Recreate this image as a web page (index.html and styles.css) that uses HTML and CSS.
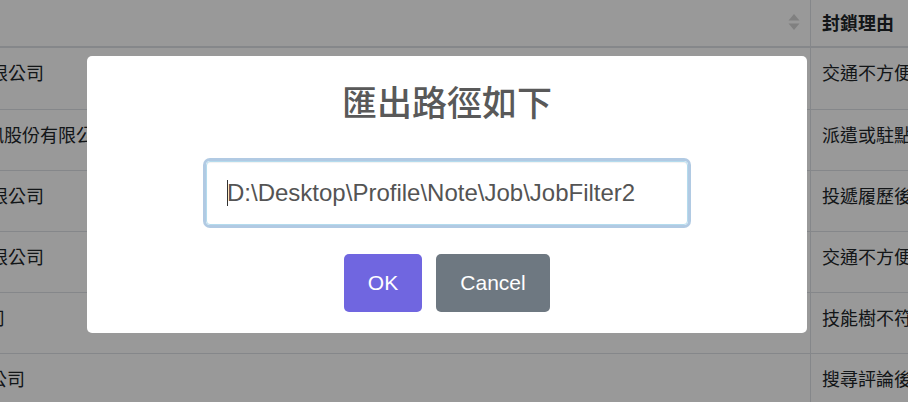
FILE: index.html
```html
<!DOCTYPE html>
<html lang="zh-Hant">
<head>
<meta charset="utf-8">
<title>匯出路徑</title>
<link rel="stylesheet" href="styles.css">
</head>
<body>
<div class="page">
  <div class="thead">
    <div class="c1"></div>
    <div class="c2">
      <svg class="sort" width="12" height="18" viewBox="0 0 12 18" aria-hidden="true">
        <path d="M6 1 L11.5 7.5 H0.5 Z" />
        <path d="M6 17 L11.5 10.5 H0.5 Z" />
      </svg>
    </div>
    <div class="c3 th">封鎖理由</div>
  </div>
  <div class="row">
    <div class="c1"><span class="name n1">台灣數位科技有限公司</span></div>
    <div class="c2"></div>
    <div class="c3">交通不方便，通勤時間過長</div>
  </div>
  <div class="row">
    <div class="c1"><span class="name n2">群創資訊股份有限公司</span></div>
    <div class="c2"></div>
    <div class="c3">派遣或駐點工作</div>
  </div>
  <div class="row">
    <div class="c1"><span class="name n3">日新國際有限公司</span></div>
    <div class="c2"></div>
    <div class="c3">投遞履歷後無回應</div>
  </div>
  <div class="row">
    <div class="c1"><span class="name n3">永豐網路有限公司</span></div>
    <div class="c2"></div>
    <div class="c3">交通不方便</div>
  </div>
  <div class="row">
    <div class="c1"><span class="name n5">宏達科技公司</span></div>
    <div class="c2"></div>
    <div class="c3">技能樹不符合</div>
  </div>
  <div class="row">
    <div class="c1"><span class="name n6">中華軟體公司</span></div>
    <div class="c2"></div>
    <div class="c3">搜尋評論後不考慮</div>
  </div>
</div>

<div class="overlay">
  <div class="dialog" role="dialog" aria-modal="true">
    <h2 class="title">匯出路徑如下</h2>
    <div class="input"><span class="caret"></span>D:\Desktop\Profile\Note\Job\JobFilter2</div>
    <div class="actions">
      <button class="btn btn-ok" type="button">OK</button>
      <button class="btn btn-cancel" type="button">Cancel</button>
    </div>
  </div>
</div>
</body>
</html>
```

FILE: styles.css
```css
* {
  box-sizing: border-box;
}

html,
body {
  margin: 0;
  padding: 0;
  width: 908px;
  height: 402px;
  overflow: hidden;
  background: #fff;
}

body {
  font-family: "Liberation Sans", "Noto Sans CJK TC", sans-serif;
  color: #212529;
  font-size: 16px;
}

.page {
  margin-left: -200px;
  width: 1308px;
  font-family: "Noto Sans CJK TC", "Liberation Sans", sans-serif;
  font-size: 18px;
}

.thead {
  display: flex;
  height: 48px;
  border-bottom: 2px solid #dee2e6;
}

.row {
  display: flex;
  height: 61px;
  border-top: 1px solid #dee2e6;
}

.thead + .row {
  border-top: 0;
  height: 61px;
}

.c1 {
  width: 300px;
  flex: none;
  padding-top: 12px;
  line-height: 24px;
  white-space: nowrap;
  overflow: hidden;
}

.c2 {
  width: 710px;
  flex: none;
  display: flex;
  justify-content: flex-end;
  align-items: flex-start;
  padding: 13px 10px 0 0;
}

.c3 {
  width: 298px;
  flex: none;
  border-left: 1px solid #dee2e6;
  padding: 12px 0 0 11px;
  line-height: 24px;
  white-space: nowrap;
  overflow: hidden;
}

.th {
  font-weight: 700;
  padding-top: 10px;
}

.sort {
  display: block;
  fill: #d6d6d6;
}

.name {
  display: inline-block;
}

.n1 { margin-left: 64px; }
.n2 { margin-left: 132px; }
.n3 { margin-left: 100px; }
.n5 { margin-left: 97px; }
.n6 { margin-left: 117px; }

/* modal */
.overlay {
  position: fixed;
  inset: 0;
  background: rgba(0, 0, 0, 0.4);
  display: flex;
  align-items: flex-start;
  justify-content: flex-start;
  padding: 56px 0 0 87px;
}

.dialog {
  width: 720px;
  height: 277px;
  background: #fff;
  border-radius: 5px;
  display: flex;
  flex-direction: column;
  align-items: center;
  padding: 24px 0 21px;
}

.title {
  margin: 0;
  font-family: "Noto Sans CJK TC", sans-serif;
  font-size: 35px;
  line-height: 42px;
  height: 42px;
  font-weight: 500;
  color: #595959;
  text-align: center;
}

.input {
  margin-top: 39px;
  width: 482px;
  height: 64px;
  border: 1px solid #b4dbed;
  border-radius: 4px;
  box-shadow: inset 0 1px 1px rgba(0, 0, 0, 0.06), 0 0 0 3px rgba(100, 150, 200, 0.5);
  padding-left: 20px;
  display: flex;
  align-items: center;
  font-family: "Liberation Sans", sans-serif;
  font-size: 24px;
  color: #545454;
  white-space: nowrap;
}

.caret {
  display: inline-block;
  width: 1px;
  height: 26px;
  margin-right: -1px;
  background: #333;
}

.actions {
  margin-top: 29px;
  display: flex;
  gap: 14px;
}

.btn {
  height: 58px;
  border: 0;
  border-radius: 5px;
  padding: 0 23px;
  font-family: "Liberation Sans", sans-serif;
  font-size: 21px;
  color: #fff;
  cursor: pointer;
}

.btn-ok {
  width: 78px;
  background: #7066e0;
}

.btn-cancel {
  width: 114px;
  background: #6e7881;
}
```
